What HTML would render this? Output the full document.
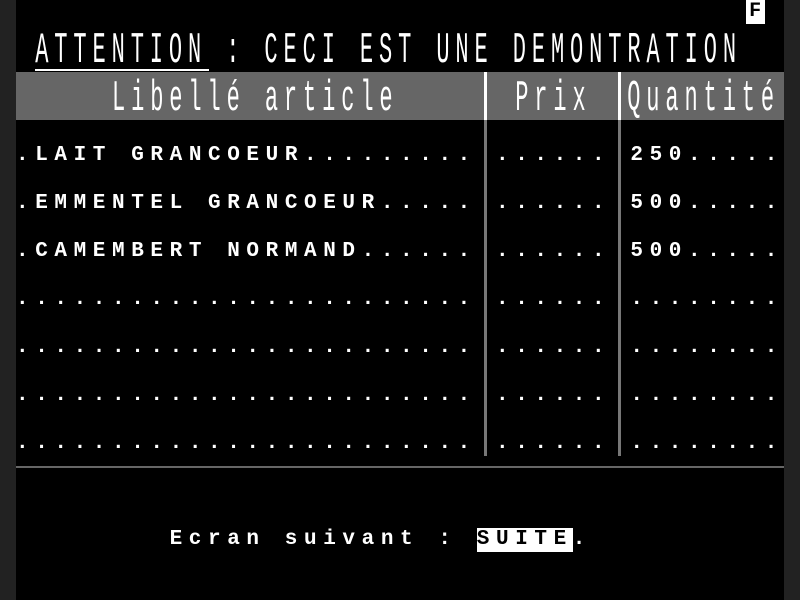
<!DOCTYPE html>
<html><head><meta charset="utf-8"><style>
*{margin:0;padding:0}
body{width:800px;height:600px;background:#222;position:relative;overflow:hidden;font-family:"Liberation Mono",monospace;color:#fff}
#scr{position:absolute;left:16px;top:0;width:768px;height:600px;background:#000}
.r{position:absolute;left:0;height:24px;line-height:24px;font-size:21px;letter-spacing:6.6px;white-space:pre;font-weight:bold}
.d{transform:scaleY(2);transform-origin:0 0;font-weight:normal;font-size:22px;letter-spacing:5.9px}
.bar{position:absolute;left:0;top:72px;width:768px;height:48px;background:#666}
.vl{position:absolute;width:3px;background:#777;top:72px;height:384px}
.vlw{position:absolute;width:3px;background:#fff;top:72px;height:48px}
</style></head><body>
<div id="scr">
<div style="position:absolute;left:729.6px;top:0;width:19.2px;height:24px;background:#fff;color:#000;font-size:20px;line-height:24px;text-align:center;font-weight:bold">F</div>
<div class="r d" style="top:28px;left:19.2px">ATTENTION : CECI EST UNE DEMONTRATION</div>
<div style="position:absolute;left:19px;top:69px;width:174px;height:2px;background:#fff"></div>
<div class="bar"></div>
<div class="r d" style="top:76px;left:96px">Libellé article</div>
<div class="r d" style="top:76px;left:499.2px">Prix</div>
<div class="r d" style="top:76px;left:611.2px">Quantité</div>
<div class="vl" style="left:468px"></div>
<div class="vl" style="left:602px"></div>
<div class="vlw" style="left:468px"></div>
<div class="vlw" style="left:602px"></div>

<div class="r" style="top:144px">.LAIT GRANCOEUR.........</div>
<div class="r" style="top:192px">.EMMENTEL GRANCOEUR.....</div>
<div class="r" style="top:240px">.CAMEMBERT NORMAND......</div>
<div class="r" style="top:288px">........................</div>
<div class="r" style="top:336px">........................</div>
<div class="r" style="top:384px">........................</div>
<div class="r" style="top:432px">........................</div>

<div class="r" style="top:144px;left:480px">......</div>
<div class="r" style="top:192px;left:480px">......</div>
<div class="r" style="top:240px;left:480px">......</div>
<div class="r" style="top:288px;left:480px">......</div>
<div class="r" style="top:336px;left:480px">......</div>
<div class="r" style="top:384px;left:480px">......</div>
<div class="r" style="top:432px;left:480px">......</div>

<div class="r" style="top:144px;left:614.4px">250.....</div>
<div class="r" style="top:192px;left:614.4px">500.....</div>
<div class="r" style="top:240px;left:614.4px">500.....</div>
<div class="r" style="top:288px;left:614.4px">........</div>
<div class="r" style="top:336px;left:614.4px">........</div>
<div class="r" style="top:384px;left:614.4px">........</div>
<div class="r" style="top:432px;left:614.4px">........</div>

<div style="position:absolute;left:0;top:466px;width:768px;height:2px;background:#666"></div>
<div class="r" style="top:528px;left:153.6px">Ecran suivant :</div>
<div style="position:absolute;left:460.8px;top:528px;width:96px;height:24px;background:#fff"></div>
<div class="r" style="top:528px;left:460.8px;color:#000">SUITE</div>
<div class="r" style="top:528px;left:556.8px">.</div>
</div>
</body></html>
